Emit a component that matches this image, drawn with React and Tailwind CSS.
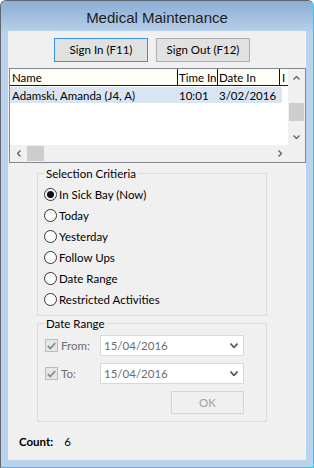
import React from "react";

const F = { fontFamily: "Lato, 'Liberation Sans', sans-serif" };

function Chevron({ dir = "down", color = "#606060", w = 7, h = 4, sw = 1.3 }) {
  const paths = {
    down: `M0.5 0.5 L${w / 2} ${h - 0.5} L${w - 0.5} 0.5`,
    up: `M0.5 ${h - 0.5} L${w / 2} 0.5 L${w - 0.5} ${h - 0.5}`,
  };
  if (dir === "left" || dir === "right") {
    const d =
      dir === "left"
        ? `M${h - 0.5} 0.5 L0.5 ${w / 2} L${h - 0.5} ${w - 0.5}`
        : `M0.5 0.5 L${h - 0.5} ${w / 2} L0.5 ${w - 0.5}`;
    return (
      <svg width={h} height={w} viewBox={`0 0 ${h} ${w}`}>
        <path d={d} fill="none" stroke={color} strokeWidth={sw} />
      </svg>
    );
  }
  return (
    <svg width={w} height={h} viewBox={`0 0 ${w} ${h}`}>
      <path d={paths[dir]} fill="none" stroke={color} strokeWidth={sw} />
    </svg>
  );
}

function Radio({ label, checked }) {
  return (
    <div className="h-[21px] flex items-center">
      <div className="w-[13px] h-[13px] rounded-full border border-[#333333] bg-white flex items-center justify-center">
        {checked && <div className="w-[7px] h-[7px] rounded-full bg-[#111111]" />}
      </div>
      <span className="ml-[2px] text-[11.5px] leading-[15px] text-black whitespace-nowrap">{label}</span>
    </div>
  );
}

function DateRow({ label, value }) {
  return (
    <div className="h-[21px] flex items-center">
      <div className="w-[55px] flex items-center">
        <div className="w-[13px] h-[13px] border border-[#bcbcbc] bg-[#e6e6e6] flex items-center justify-center">
          <svg width="9" height="8" viewBox="0 0 9 8">
            <path d="M0.8 4 L3.3 6.5 L8.2 1" fill="none" stroke="#8a8a8a" strokeWidth="1.8" />
          </svg>
        </div>
        <span className="ml-[3px] text-[11.5px] leading-[15px] text-[#6d6d6d]">{label}</span>
      </div>
      <div className="w-[144px] h-[21px] border border-[#d9d9d9] bg-white flex items-center justify-between pl-[3px] pr-[5px]">
        <span className="text-[11.5px] leading-[15px] text-[#6d6d6d]">{value}</span>
        <Chevron dir="down" color="#5a5a5a" w={8} h={5} sw={1.8} />
      </div>
    </div>
  );
}

function GroupBox({ title, className, children }) {
  return (
    <div className={`border border-[#dcdcdc] flex flex-col ${className}`}>
      <span className="-mt-[8px] ml-[6px] px-[2px] w-fit bg-[#f0f0f0] text-[11.5px] leading-[15px] text-black whitespace-nowrap">
        {title}
      </span>
      {children}
    </div>
  );
}

export default function App() {
  return (
    <div
      style={F}
      className="w-[314px] h-[468px] flex flex-col rounded-t-[6px] border border-t-[#5f6770] border-l-[#5f6770] border-r-[#22cdf0] border-b-[#22cdf0] bg-[#bad2eb] overflow-hidden"
    >
      <div className="h-[30px] shrink-0 bg-gradient-to-b from-[#8cadd4] to-[#b7cfe9] flex items-center justify-center pt-[3px]">
        <span className="leading-[20px] text-[#1e1e1e]" style={{ fontFamily: "'Liberation Sans', sans-serif", fontSize: 15 }}>
          Medical Maintenance
        </span>
      </div>
      <div className="ml-[7px] mr-[7px] h-[429px] shrink-0 bg-[#f0f0f0] flex flex-col">
        <div className="pt-[7px] pl-[46px] flex gap-[8px]">
          <div className="w-[94px] h-[24px] border border-[#3593ea] bg-[#e1e1e1] flex items-center justify-center text-[11.5px] text-black">
            Sign In (F11)
          </div>
          <div className="w-[94px] h-[24px] border border-[#adadad] bg-[#e1e1e1] flex items-center justify-center text-[11.5px] text-black">
            Sign Out (F12)
          </div>
        </div>

        <div className="mt-[6px] ml-[1px] w-[297px] h-[95px] border border-[#828790] bg-white flex flex-col">
          <div className="flex h-[76px]">
            <div className="flex-1 flex flex-col overflow-hidden">
              <div className="h-[17px] flex border-b border-[#1a1a1a] bg-[#fefdf6] text-[11.5px] leading-[15px] text-black whitespace-nowrap">
                <div className="w-[168px] shrink-0 border-r border-[#111111] pl-[2px] flex items-center">Name</div>
                <div className="w-[40px] shrink-0 border-r border-[#111111] pl-[1px] flex items-center overflow-hidden">Time In</div>
                <div className="w-[62px] shrink-0 border-r border-[#111111] pl-[1px] flex items-center overflow-hidden">Date In</div>
                <div className="flex-1 pl-[2px] flex items-center overflow-hidden">I</div>
              </div>
              <div className="mt-[1px] h-[16px] flex text-[11.5px] leading-[15px] text-black whitespace-nowrap">
                <div className="w-[272px] shrink-0 flex bg-[#d9e5f3]">
                  <div className="w-[168px] shrink-0 pl-[2px] flex items-center">Adamski, Amanda (J4, A)</div>
                  <div className="w-[40px] shrink-0 pl-[1px] flex items-center">10:01</div>
                  <div className="w-[62px] shrink-0 pl-[1px] flex items-center">3/02/2016</div>
                </div>
              </div>
            </div>
            <div className="w-[17px] bg-[#f0f0f0] flex flex-col">
              <div className="h-[17px] flex items-center justify-center">
                <Chevron dir="up" />
              </div>
              <div className="flex-1 flex flex-col">
                <div className="mt-[17px] mx-[1px] h-[18px] bg-[#cdcdcd]" />
              </div>
              <div className="h-[17px] flex items-center justify-center">
                <Chevron dir="down" />
              </div>
            </div>
          </div>
          <div className="h-[17px] flex bg-[#f0f0f0]">
            <div className="flex-1 flex items-center">
              <div className="w-[17px] h-[17px] flex items-center justify-center">
                <Chevron dir="left" />
              </div>
              <div className="w-[17px] h-[15px] bg-[#cdcdcd]" />
              <div className="flex-1" />
              <div className="w-[17px] h-[17px] flex items-center justify-center">
                <Chevron dir="right" />
              </div>
            </div>
            <div className="w-[17px]" />
          </div>
        </div>

        <GroupBox title="Selection Critieria" className="mt-[10px] ml-[29px] w-[230px] h-[143px]">
          <div className="mt-[3px] pl-[6px] flex flex-col">
            <Radio label="In Sick Bay (Now)" checked />
            <Radio label="Today" />
            <Radio label="Yesterday" />
            <Radio label="Follow Ups" />
            <Radio label="Date Range" />
            <Radio label="Restricted Activities" />
          </div>
        </GroupBox>

        <GroupBox title="Date Range" className="mt-[7px] ml-[29px] w-[230px] h-[99px]">
          <div className="mt-[4px] pl-[7px] flex flex-col gap-[7px]">
            <DateRow label="From:" value="15/04/2016" />
            <DateRow label="To:" value="15/04/2016" />
          </div>
          <div className="mt-[7px] ml-[133px] w-[73px] h-[23px] border border-[#d5d5d5] bg-[#f0f0f0] flex items-center justify-center text-[11.5px] text-[#a0a0a0]">
            OK
          </div>
        </GroupBox>

        <div className="mt-[12px] pl-[11px] flex items-center text-[11.5px] leading-[15px] text-black">
          <span className="font-bold">Count:</span>
          <span className="ml-[11px]">6</span>
        </div>
      </div>
    </div>
  );
}
